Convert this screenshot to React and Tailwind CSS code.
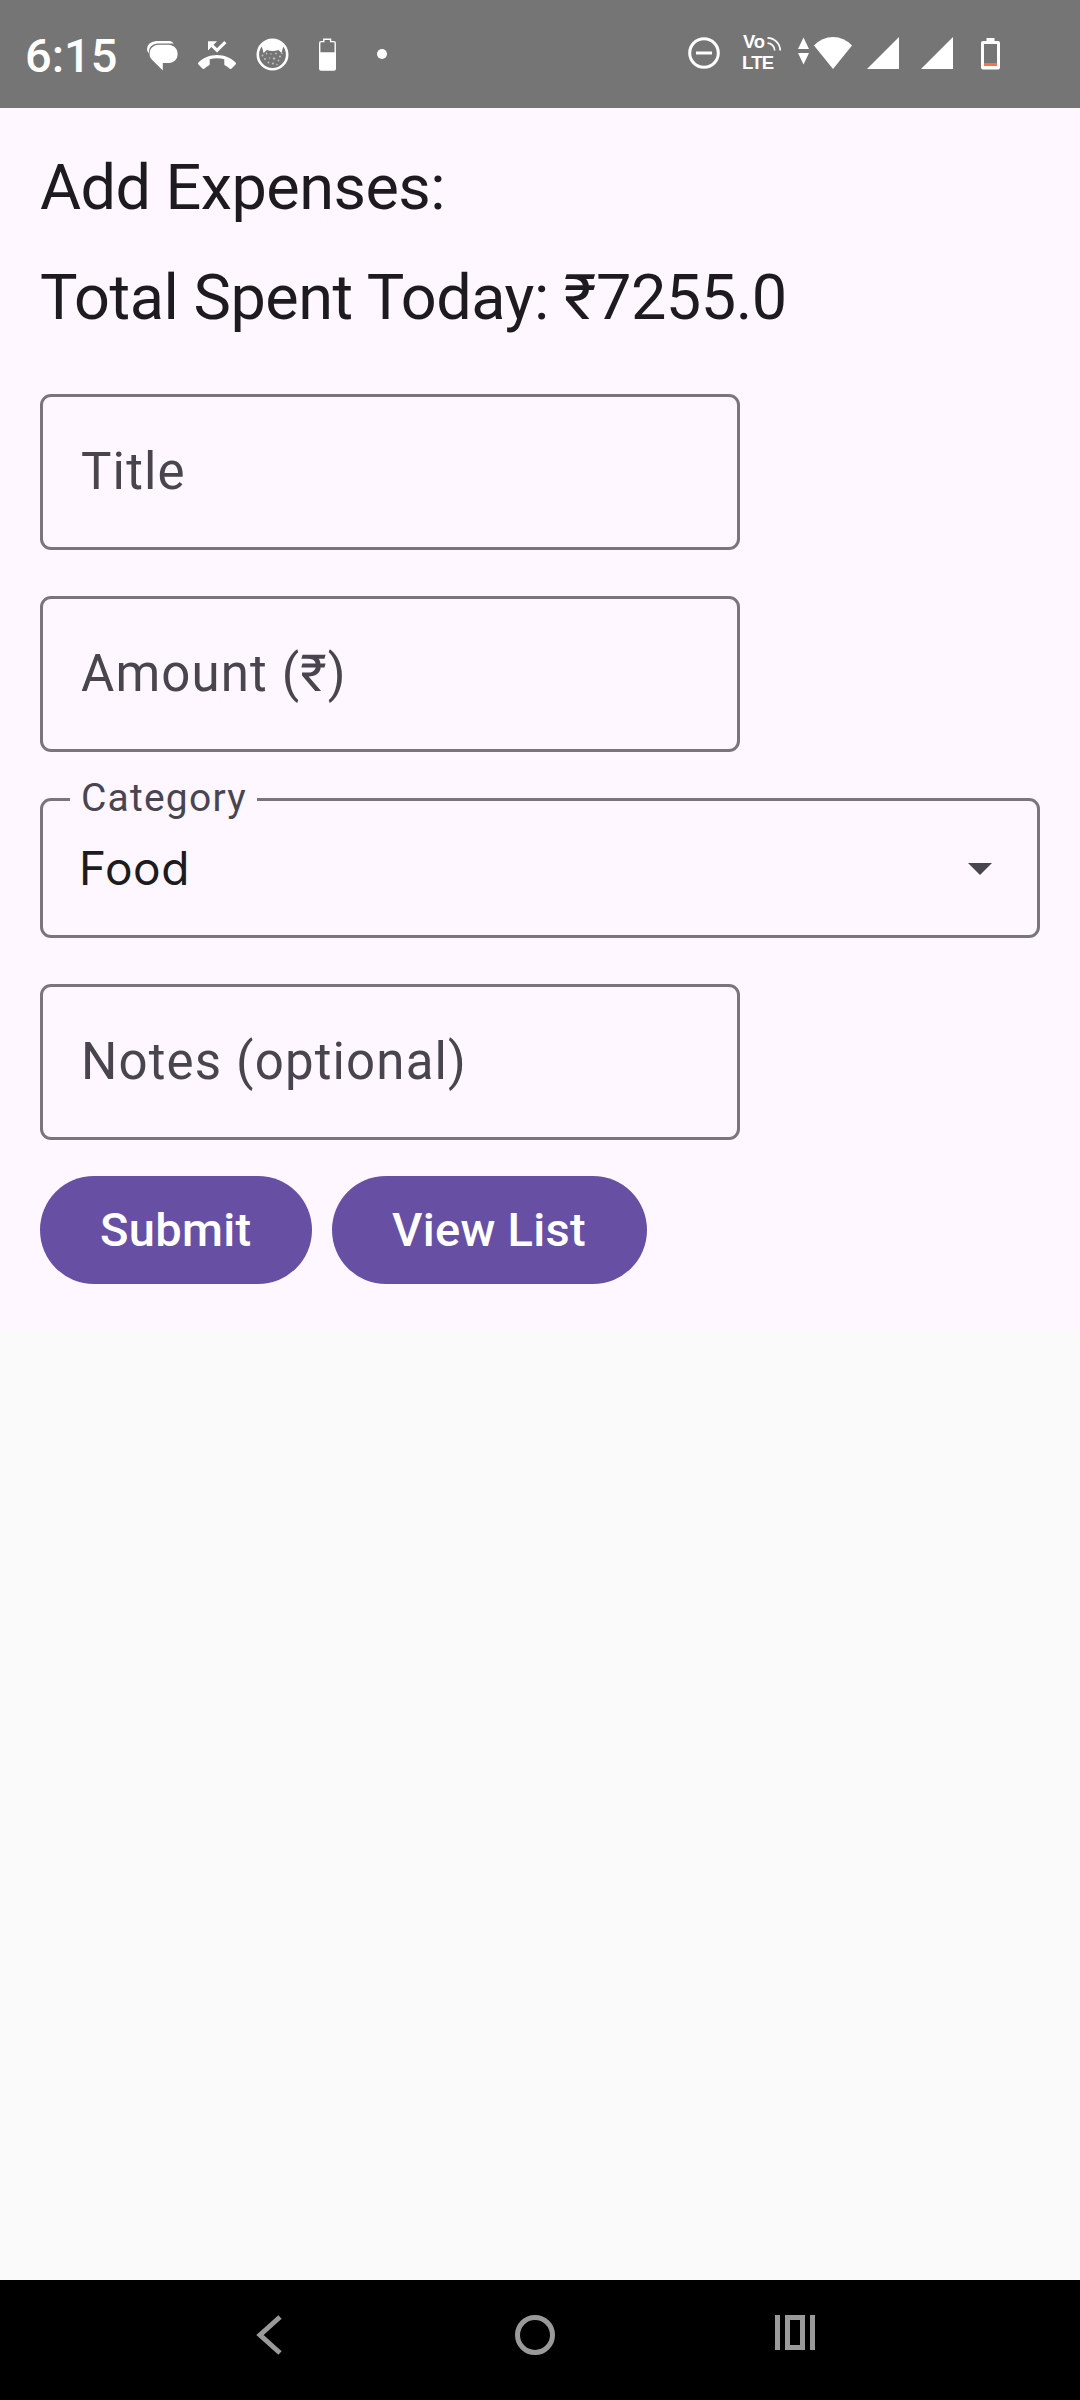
import React from "react";

function MessagesIcon() {
  return (
    <svg className="ml-[31px] mt-[3px] shrink-0" width="31" height="30" viewBox="147 41 31 30" fill="#fff">
      <path d="M156 41H170Q172.4 41.6 173.8 43.6H157.500Q148.600 44.800 148.600 53.400Q147 51.500 147 49Q147.400 42 156 41Z" />
      <path d="M158.500 44.800H168.500C174.500 45.200 177.600 49 177.600 54S174.500 62.600 168.500 63H162.800V70.400L152.300 60C150.300 58 149.600 56.500 149.600 54C149.600 48.500 153 45.200 158.500 44.800Z" />
    </svg>
  );
}

function MissedCallIcon() {
  return (
    <svg className="ml-[20px] mt-[2px] shrink-0" width="38" height="28" viewBox="0 3 24 17.9" preserveAspectRatio="none" fill="#fff">
      <path d="M6.300 3.200H12L6.300 9Z" />
      <path d="M7.500 4.500L12 9L17.300 3.700" fill="none" stroke="#fff" strokeWidth="1.900" />
      <path d="M23.710 16.670C20.660 13.780 16.540 12 12 12S3.340 13.780.290 16.670c-.180.180-.290.430-.290.710s.110.530.290.710l2.480 2.480c.180.180.430.290.710.290.270 0 .520-.110.700-.280.790-.740 1.690-1.360 2.660-1.850.330-.160.560-.500.560-.900v-3.100c1.450-.480 3-.730 4.600-.730s3.150.250 4.600.720v3.100c0 .390.230.740.560.900.980.490 1.870 1.120 2.660 1.850.180.180.430.280.700.280.280 0 .530-.110.710-.290l2.480-2.480c.180-.180.290-.430.290-.710s-.120-.520-.300-.700z" />
    </svg>
  );
}

function CatIcon() {
  return (
    <svg className="ml-[20px] shrink-0" width="33" height="33" viewBox="256 37.500 33 33" fill="#fff">
      <circle cx="272.500" cy="54" r="14.700" fill="none" stroke="#fff" strokeWidth="2.600" />
      <path d="M261 44.500Q266 39.500 272.500 39.500T284 44.500Q282.500 48 281.500 52.500L278.500 49.600Q272.500 51.500 266.800 49.600L263.500 52.500Q262.700 48 261 44.500Z" />
      <g opacity=".5">
        <circle cx="262.500" cy="55" r="1" />
        <circle cx="266.500" cy="53" r=".9" />
        <circle cx="271" cy="53.500" r=".8" />
        <circle cx="276" cy="53" r=".9" />
        <circle cx="280" cy="56" r="1.100" />
        <circle cx="265" cy="58.500" r="1.100" />
        <circle cx="269.500" cy="57.500" r=".8" />
        <circle cx="274" cy="58" r="1.200" />
        <circle cx="278.500" cy="60" r=".9" />
        <circle cx="268.500" cy="62" r="1" />
        <circle cx="273" cy="63" r="1.100" />
        <circle cx="282" cy="53" r=".8" />
        <circle cx="277" cy="64" r=".8" />
      </g>
    </svg>
  );
}

function HalfBatteryIcon() {
  return (
    <svg className="ml-[30px] mt-px shrink-0" width="17" height="33" viewBox="319 38 17 33">
      <path d="M319.700 53V43Q319.700 41.600 321.200 41.600H323.800V39.200H330.600V41.600H333.800Q335.200 41.600 335.200 43V53" fill="none" stroke="#fff" strokeWidth="1.400" />
      <path d="M319 52.300H336V68.500Q336 70.700 334 70.700H321Q319 70.700 319 68.500Z" fill="#fff" />
    </svg>
  );
}

function DoNotDisturbIcon() {
  return (
    <svg className="shrink-0" width="32" height="32" viewBox="0 0 32 32" fill="none" stroke="#fff" strokeWidth="3">
      <circle cx="16" cy="16" r="14.300" />
      <path d="M8 16H24" />
    </svg>
  );
}

function VolteIcon() {
  return (
    <svg className="mb-[2px] ml-[22px] shrink-0" width="40" height="40" viewBox="742 32 40 40">
      <g fill="#fff" fontFamily="'Liberation Sans', Arial, sans-serif" fontWeight="700" fontSize="18.500">
        <text x="743" y="48" textLength="22">Vo</text>
        <text x="742" y="69" textLength="32">LTE</text>
      </g>
      <g fill="none" stroke="#fff" strokeWidth="1.700">
        <path d="M767.500 37.800A12.800 12.800 0 0 1 780.200 50.500" />
        <path d="M767.500 43.200A7.200 7.200 0 0 1 774.700 50.400" />
      </g>
    </svg>
  );
}

function WifiIcon() {
  return (
    <svg className="ml-[16px] shrink-0" width="54" height="32" viewBox="798 37 54 32" fill="#fff">
      <path d="M798 49L803.500 37.500L809 49Z" />
      <path d="M798 53H809L803.500 64.500Z" />
      <path d="M833 69L814 45.500Q822 37 833 37T852 45.500Z" />
    </svg>
  );
}

function SignalIcon({ className }) {
  return (
    <svg className={className} width="32" height="32" viewBox="0 0 32 32" fill="#fff">
      <path d="M0 32L32 0V32Z" />
    </svg>
  );
}

function LowBatteryIcon() {
  return (
    <svg className="ml-[28px] mt-px shrink-0" width="19" height="32" viewBox="0 0 19 32">
      <path d="M5.500 0H13.500V3H17Q19 3 19 5V29.500Q19 31.500 17 31.500H2Q0 31.500 0 29.500V5Q0 3 2 3H5.500ZM3 6V28H16V6Z" fill="#fff" fillRule="evenodd" />
      <rect x="3" y="25" width="13" height="3" fill="#ff7043" />
    </svg>
  );
}

function StatusBar() {
  return (
    <header className="flex h-[108px] items-center bg-[#757575] pl-[25px] pr-[80px]">
      <span className="w-[91px] shrink-0 whitespace-nowrap pt-[2px] text-[47px] font-medium leading-none text-white">6:15</span>
      <div className="flex items-center">
        <MessagesIcon />
        <MissedCallIcon />
        <CatIcon />
        <HalfBatteryIcon />
        <span className="ml-[41px] size-[10px] rounded-full bg-white" />
      </div>
      <div className="ml-auto flex h-full items-center pb-[2px]">
        <DoNotDisturbIcon />
        <VolteIcon />
        <WifiIcon />
        <SignalIcon className="ml-[15px] shrink-0" />
        <SignalIcon className="ml-[22px] shrink-0" />
        <LowBatteryIcon />
      </div>
    </header>
  );
}

function TextField({ label, className }) {
  return (
    <div className={`flex h-[156px] w-[700px] items-center rounded-[11px] border-[3px] border-[#79747e] pb-[2px] pl-[38px] text-[51px] leading-none tracking-[1.15px] text-[#49454f] ${className}`}>
      {label}
    </div>
  );
}

function SelectField({ label, value }) {
  return (
    <div className="relative mt-[46px] flex h-[140px] items-center justify-between rounded-[11px] border-[3px] border-[#79747e] pl-[36px] pr-[45px]">
      <span className="absolute -top-[24px] left-[27px] flex h-[42px] w-[187px] items-center whitespace-nowrap bg-[#fef7ff] pl-[11px] text-[39px] leading-none tracking-[1.2px] text-[#49454f]">
        {label}
      </span>
      <span className="font-['Inter',sans-serif] text-[46px] leading-none tracking-[0.6px] text-[#1d1b20]">{value}</span>
      <svg className="mt-[2px]" width="24" height="12" viewBox="0 0 24 12" fill="#49454f">
        <path d="M0 0H24L12 12Z" />
      </svg>
    </div>
  );
}

function PillButton({ children, className }) {
  return (
    <button className={`h-[108px] rounded-full bg-[#6750a4] pb-[2px] pl-[60px] text-left text-[47px] font-medium leading-none tracking-[0.3px] text-white ${className}`}>
      {children}
    </button>
  );
}

function NavigationBar() {
  return (
    <nav className="flex h-[120px] items-start bg-black pl-[256px] pt-[35px]">
      <svg width="26" height="40" viewBox="0 0 26 40" fill="none" stroke="#9a9a9a" strokeWidth="5">
        <path d="M24 2L4 20L24 38" />
      </svg>
      <svg className="ml-[233px]" width="40" height="40" viewBox="0 0 40 40" fill="none" stroke="#9a9a9a" strokeWidth="5">
        <circle cx="20" cy="20" r="17.500" />
      </svg>
      <svg className="ml-[220px]" width="40" height="35" viewBox="0 0 40 35" fill="#9a9a9a">
        <path d="M0 0H5V35H0ZM35 0H40V35H35ZM10 0H30V35H10ZM15 5V30H25V5Z" fillRule="evenodd" />
      </svg>
    </nav>
  );
}

export default function App() {
  return (
    <div className="flex h-[2400px] w-[1080px] flex-col bg-[#fafafa] font-['Roboto',sans-serif]">
      <StatusBar />
      <main className="h-[1222px] bg-[#fef7ff] px-[40px] pt-[44px] text-[#1d1b20]">
        <h1 className="whitespace-nowrap text-[63px] leading-[72px] tracking-[-0.55px]">Add Expenses:</h1>
        <p className="mt-[38px] whitespace-nowrap text-[63px] leading-[72px] tracking-[-0.47px]">Total Spent Today: ₹7255.0</p>
        <TextField label="Title" className="mt-[60px]" />
        <TextField label="Amount (₹)" className="mt-[46px]" />
        <SelectField label="Category" value="Food" />
        <TextField label="Notes (optional)" className="mt-[46px]" />
        <div className="mt-[36px] flex gap-[20px]">
          <PillButton className="w-[272px]">Submit</PillButton>
          <PillButton className="w-[315px]">View List</PillButton>
        </div>
      </main>
      <div className="flex-1" />
      <NavigationBar />
    </div>
  );
}
